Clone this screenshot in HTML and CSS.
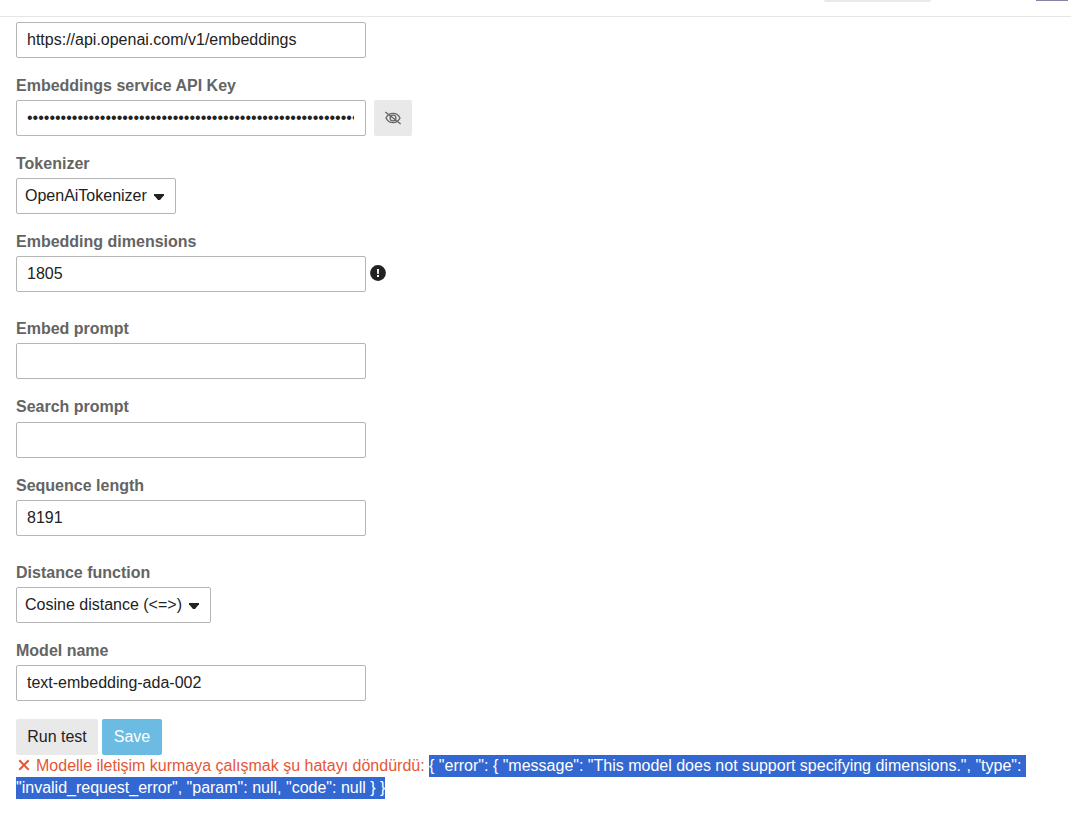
FILE: index.html
```
<!DOCTYPE html>
<html lang="en">
<head>
  <meta charset="UTF-8">
  <meta name="viewport" content="width=device-width, initial-scale=1.0">
  <title>Embeddings</title>
  <link rel="stylesheet" href="styles.css">
</head>
<body>
  <header class="topbar">
    <div class="topbar-search"></div>
    <div class="topbar-avatar"></div>
  </header>

  <form class="settings">
    <div class="row">
      <input type="text" value="https://api.openai.com/v1/embeddings">
    </div>

    <label for="key">Embeddings service API Key</label>
    <div class="row">
      <input id="key" type="password" value="0123456789012345678901234567890123456789012345678901234567890123456789">
      <button type="button" class="btn btn-eye">
        <svg width="18" height="16" viewBox="0 0 18 16" fill="none" stroke="#666" stroke-width="1.3">
          <path d="M2 8C3.3 5.2 5.8 3.4 9 3.4S14.7 5.2 16 8C14.7 10.8 12.2 12.6 9 12.6S3.3 10.8 2 8Z"/>
          <circle cx="9" cy="8" r="2.9"/>
          <path d="M1.3 2L16.7 14"/>
        </svg>
      </button>
    </div>

    <label>Tokenizer</label>
    <div class="row">
      <button type="button" class="select select-tokenizer">OpenAiTokenizer <span class="caret"></span></button>
    </div>

    <label for="dimensions">Embedding dimensions</label>
    <div class="row row-number">
      <input id="dimensions" type="text" value="1805">
      <svg class="hint" width="16" height="16" viewBox="0 0 16 16">
        <circle cx="8" cy="8" r="7.9" fill="#222"/>
        <path d="M7 4h2l-.2 5H7.2zM7 10h2v2H7z" fill="#fff"/>
      </svg>
    </div>

    <label for="embed">Embed prompt</label>
    <div class="row row-embed">
      <input id="embed" type="text">
    </div>

    <label for="search">Search prompt</label>
    <div class="row row-search">
      <input id="search" type="text">
    </div>

    <label for="sequence">Sequence length</label>
    <div class="row row-number">
      <input id="sequence" type="text" value="8191">
    </div>

    <label>Distance function</label>
    <div class="row">
      <button type="button" class="select select-distance">Cosine distance (&lt;=&gt;) <span class="caret"></span></button>
    </div>

    <label for="model">Model name</label>
    <div class="row">
      <input id="model" type="text" value="text-embedding-ada-002">
    </div>

    <div class="actions">
      <button type="button" class="btn btn-test">Run test</button>
      <button type="button" class="btn btn-save">Save</button>
    </div>

    <div class="result">
      <svg class="cross" width="16" height="12" viewBox="0 0 16 12" stroke="#e45735" stroke-width="2">
        <path d="M3.3 1.3L12.7 10.7M12.7 1.3L3.3 10.7"/>
      </svg>
      <span class="message">Modelle iletişim kurmaya çalışmak şu hatayı döndürdü: </span>
      <span class="selected selected-start">{ "error": { "message": "This model does not support specifying dimensions.", "type": </span>
      <span class="selected">"invalid_request_error", "param": null, "code": null } }</span>
    </div>
  </form>
</body>
</html>
```
FILE: styles.css
```
* {
  box-sizing: border-box;
}
body {
  margin: 0;
  background: #fff;
  color: #222;
  font-family: Arial, "Liberation Sans", sans-serif;
  font-size: 16px;
  line-height: 22px;
}
.topbar {
  display: flex;
  justify-content: flex-end;
  align-items: flex-start;
  gap: 105px;
  height: 17px;
  padding-right: 3px;
  border-bottom: 1px solid #e5e5e5;
}
.topbar-search {
  width: 107px;
  height: 2px;
  background: #e9e9e9;
  border-radius: 0 0 2px 2px;
}
.topbar-avatar {
  width: 32px;
  height: 1px;
  background: #8c84a4;
}
.settings {
  padding: 5px 16px 0;
}
label {
  display: block;
  margin: 17px 0 3px;
  color: #646464;
  font-weight: bold;
}
.row {
  display: flex;
  height: 36px;
}
.row-number {
  margin-bottom: 26px;
}
.row-embed + label {
  margin-bottom: 4px;
}
input {
  width: 350px;
  height: 36px;
  padding: 0 11px 0 10px;
  border: 1px solid #b5b5b5;
  border-radius: 2px;
  background: #fff;
  color: #222;
  font: inherit;
}
.btn {
  height: 36px;
  padding: 0;
  border: none;
  border-radius: 2px;
  background: #e9e9e9;
  color: #222;
  font: inherit;
}
.btn-eye {
  display: flex;
  align-items: center;
  justify-content: center;
  width: 38px;
  margin-left: 8px;
}
.select {
  display: flex;
  align-items: center;
  justify-content: space-between;
  height: 36px;
  padding: 0 11px 0 8px;
  border: 1px solid #b5b5b5;
  border-radius: 2px;
  background: #fff;
  color: #222;
  font: inherit;
}
.select-tokenizer {
  width: 160px;
}
.select-distance {
  width: 195px;
}
.caret {
  width: 10px;
  height: 6px;
  margin-top: 2px;
  background: #222;
  clip-path: polygon(0 0, 100% 0, 100% 20%, 60% 100%, 40% 100%, 0 20%);
}
.hint {
  margin: 9px 0 0 4px;
}
.actions {
  display: flex;
  gap: 4px;
  margin-top: 18px;
}
.btn-test {
  width: 82px;
}
.btn-save {
  width: 60px;
  background: #6cbbe2;
  color: #fff;
}
.result {
  display: flex;
  flex-wrap: wrap;
  color: #e45735;
  white-space: pre;
}
.cross {
  margin: 4px 4px 0 0;
}
.selected {
  background: #3367d1;
  color: #fff;
}
.selected-start {
  margin-right: 10px;
}
```
